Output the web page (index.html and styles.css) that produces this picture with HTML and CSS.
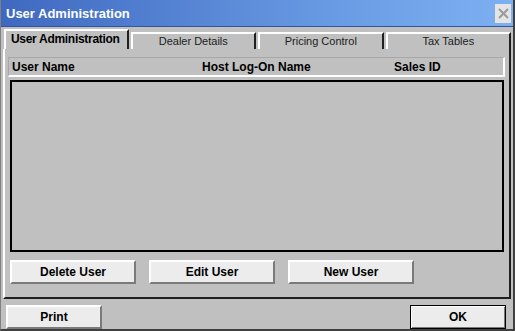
FILE: index.html
```html
<!DOCTYPE html>
<html lang="en">
<head>
    <meta charset="UTF-8">
    <title>User Administration</title>
    <link rel="stylesheet" href="styles.css">
</head>
<body>
    <div class="window">
        <div class="titlebar">
            <span class="title">User Administration</span>
            <button class="close">
                <svg width="11" height="11" viewBox="0 0 11 11">
                    <path d="M1 1 L10 10 M10 1 L1 10" stroke="#9a9a9a" stroke-width="2"/>
                </svg>
            </button>
        </div>
        <div class="tabs">
            <div class="tab active">User Administration</div>
            <div class="tab">Dealer Details</div>
            <div class="tab">Pricing Control</div>
            <div class="tab">Tax Tables</div>
        </div>
        <div class="panel">
            <div class="columns">
                <span class="col col-user">User Name</span>
                <span class="col col-host">Host Log-On Name</span>
                <span class="col col-sales">Sales ID</span>
            </div>
            <div class="list"></div>
            <div class="actions">
                <button class="btn">Delete User</button>
                <button class="btn">Edit User</button>
                <button class="btn">New User</button>
            </div>
        </div>
        <div class="footer">
            <button class="btn btn-small">Print</button>
            <button class="btn btn-small default">OK</button>
        </div>
    </div>
</body>
</html>
```

FILE: styles.css
```css
body {
    margin: 0;
    padding: 0;
    font-family: 'Liberation Sans', Arial, sans-serif;
    background: #c0c0c0;
}
.window {
    width: 515px;
    height: 331px;
    box-sizing: border-box;
    background: #c0c0c0;
    border-right: 2px solid #404040;
    border-bottom: 2px solid #404040;
    border-left: 1px solid #808080;
    display: flex;
    flex-direction: column;
}
.titlebar {
    height: 27px;
    flex-shrink: 0;
    display: flex;
    align-items: center;
    justify-content: space-between;
    padding: 0 2px 0 5px;
    background: linear-gradient(to right, #3f69c0, #6c9ee6 70%, #7db0f2);
    border-bottom: 1px solid #30559e;
    box-sizing: border-box;
}
.title {
    color: white;
    font-weight: bold;
    font-size: 13px;
}
.close {
    width: 16px;
    height: 19px;
    padding: 0;
    border: none;
    background: #e4e4e4;
    display: flex;
    align-items: center;
    justify-content: center;
}
.tabs {
    display: flex;
    align-items: flex-end;
    height: 21px;
    margin-top: 1px;
    padding-left: 3px;
}
.tab {
    height: 17px;
    width: 126px;
    margin-right: 2px;
    box-sizing: border-box;
    border-top: 2px solid white;
    border-left: 2px solid white;
    border-right: 2px solid #202020;
    font-size: 11px;
    color: #202020;
    text-align: center;
    line-height: 15px;
    white-space: nowrap;
}
.tab.active {
    height: 20px;
    width: 125px;
    font-weight: bold;
    font-size: 12px;
    letter-spacing: -0.3px;
    text-align: left;
    padding-left: 5px;
    line-height: 17px;
    color: black;
}
.panel {
    flex: 1;
    margin: 0 2px 0 2px;
    border-left: 2px solid white;
    border-right: 2px solid #202020;
    border-bottom: 2px solid #202020;
    padding: 8px 4px 0 3px;
    display: flex;
    flex-direction: column;
}
.columns {
    height: 20px;
    box-sizing: border-box;
    border-right: 2px solid white;
    border-bottom: 2px solid white;
    border-top: 1px solid #a8a8a8;
    border-left: 1px solid #a8a8a8;
    display: flex;
    align-items: center;
    font-size: 12px;
    font-weight: bold;
    color: black;
}
.col-user {
    width: 190px;
    padding-left: 3px;
}
.col-host {
    width: 192px;
}
.list {
    height: 172px;
    margin: 3px 1px 0 2px;
    border: 2px solid black;
    box-sizing: border-box;
    background: #c0c0c0;
}
.actions {
    display: flex;
    gap: 13px;
    margin-top: 8px;
    padding-left: 2px;
}
.btn {
    width: 126px;
    height: 24px;
    box-sizing: border-box;
    background: #ececec;
    border-top: 2px solid white;
    border-left: 2px solid white;
    border-right: 2px solid #7a7a7a;
    border-bottom: 2px solid #7a7a7a;
    font-family: 'Liberation Sans', Arial, sans-serif;
    font-size: 12px;
    font-weight: bold;
    color: black;
    padding: 0;
}
.footer {
    display: flex;
    justify-content: space-between;
    padding: 6px 7px 0 5px;
}
.btn-small {
    width: 96px;
}
.default {
    border: 1px solid black;
    box-shadow: inset 1px 1px 0 white, inset -1px -1px 0 #7a7a7a;
}
```
